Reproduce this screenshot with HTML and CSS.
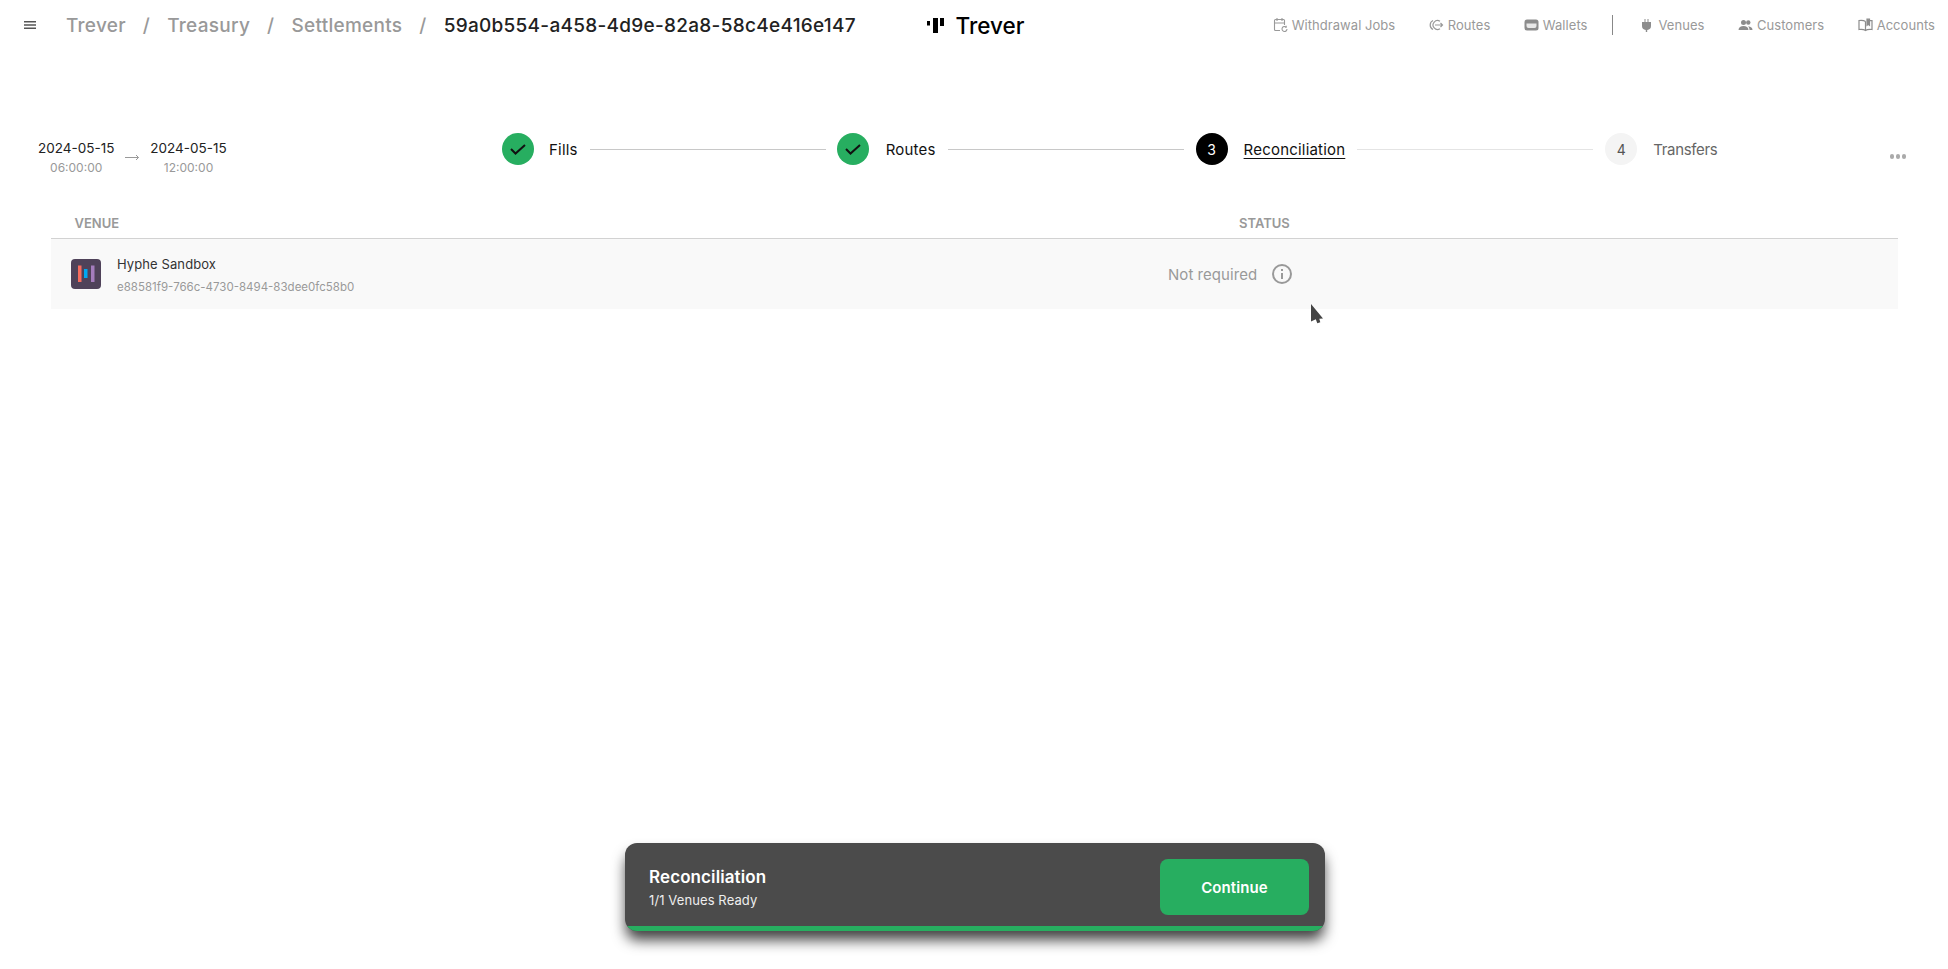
FILE: index.html
```html
<!DOCTYPE html>
<html lang="en">
<head>
<meta charset="utf-8">
<title>Settlement</title>
<link rel="stylesheet" href="styles.css">
</head>
<body>
<header class="topbar">
  <div class="crumbs">
    <svg class="menu" width="12" height="8" viewBox="0 0 12 8"><path d="M0 .75h12M0 4h12M0 7.25h12" stroke="#555" stroke-width="1.4"/></svg>
    <span class="crumb">Trever</span><span class="sep">/</span>
    <span class="crumb">Treasury</span><span class="sep">/</span>
    <span class="crumb">Settlements</span><span class="sep">/</span>
    <span class="crumb current">59a0b554-a458-4d9e-82a8-58c4e416e147</span>
  </div>
  <div class="logo">
    <svg width="17" height="15" viewBox="0 0 17 15"><path d="M0 3h3v4.500H0zM6 0h5v15H6zM13 0h4v8h-4z" fill="#000"/></svg>
    <span>Trever</span>
  </div>
  <nav class="nav">
    <a class="nav-item"><svg width="15" height="16" viewBox="0 0 15 16" fill="none" stroke="#999" stroke-width="1.1"><path d="M7 13.500H2.500a1 1 0 0 1-1-1v-9a1 1 0 0 1 1-1h8a1 1 0 0 1 1 1V8M4 1v3M9 1v3M1.500 6h10"/><path d="M14 12a2.500 2.500 0 1 1-1-2M13.200 8.800V10.200H11.800"/></svg>Withdrawal Jobs</a>
    <a class="nav-item"><svg width="15" height="14" viewBox="0 0 15 14" fill="none" stroke="#999" stroke-width="1.200"><path d="M4 2.500a5 5 0 0 0 0 9"/><path d="M11 3.200a4.500 4.500 0 1 0 0 7.600"/><path d="M6 7h7.500M11.500 5l2 2-2 2"/></svg>Routes</a>
    <a class="nav-item"><svg width="15" height="14" viewBox="0 0 15 14"><rect x=".5" y="1.500" width="14" height="11" rx="2.500" fill="#8c8c8c"/><path d="M2.500 5.500h10v2.500a2 2 0 0 1-2 2h-6a2 2 0 0 1-2-2z" fill="#e8e8e8"/></svg>Wallets</a>
    <span class="nav-div"></span>
    <a class="nav-item"><svg width="15" height="15" viewBox="0 0 15 15"><path d="M5.500 1h1v3h2V1h1v3H12v4a4 4 0 0 1-3.800 3.900V14H6.800v-2.100A4 4 0 0 1 3 8V4h2.500z" fill="#8c8c8c"/></svg>Venues</a>
    <a class="nav-item"><svg width="15" height="14" viewBox="0 0 15 14" fill="#8c8c8c"><circle cx="5.500" cy="4.500" r="2.500"/><circle cx="10.300" cy="4.500" r="2.200"/><path d="M.5 12c0-2.700 2.200-4 5-4s5 1.300 5 4z"/><path d="M11.500 12h3c0-2.200-1.400-3.500-4.500-3.800 1 .9 1.500 2.200 1.500 3.800z"/></svg>Customers</a>
    <a class="nav-item"><svg width="15" height="14" viewBox="0 0 15 14" fill="none" stroke="#8c8c8c" stroke-width="1.200"><path d="M7.500 3.500C6 2.400 3.500 2.200 1 2.500v9c2.500-.3 5-.1 6.500 1 1.500-1.100 4-1.300 6.500-1v-9c-1 0-2 0-2.500.1M7.500 3.500v9"/><path d="M9 1.200h2.500v6l-1.200-1-1.300 1z" fill="#8c8c8c"/></svg>Accounts</a>
  </nav>
</header>

<section class="steps-row">
  <div class="dates">
    <div class="date"><div class="d">2024-05-15</div><div class="t">06:00:00</div></div>
    <svg class="arrow" width="14" height="7" viewBox="0 0 14 7" fill="none" stroke="#999"><path d="M0 3.500h13.500M11 1l2.500 2.500L11 6"/></svg>
    <div class="date"><div class="d">2024-05-15</div><div class="t">12:00:00</div></div>
  </div>
  <div class="steps">
    <div class="bullet done"><svg width="16" height="11" viewBox="0 0 16 11" fill="none" stroke="#111" stroke-width="2"><path d="M1 5l4.500 4.500L15 1"/></svg></div>
    <span class="step-label step-fills">Fills</span>
    <span class="line line-first"></span>
    <div class="bullet done"><svg width="16" height="11" viewBox="0 0 16 11" fill="none" stroke="#111" stroke-width="2"><path d="M1 5l4.500 4.500L15 1"/></svg></div>
    <span class="step-label step-routes">Routes</span>
    <span class="line"></span>
    <div class="bullet active">3</div>
    <span class="step-label current">Reconciliation</span>
    <span class="line faint"></span>
    <div class="bullet todo">4</div>
    <span class="step-label muted">Transfers</span>
  </div>
  <div class="more"><i></i><i></i><i></i></div>
</section>

<section class="table">
  <div class="thead">
    <div class="col-venue">VENUE</div>
    <div class="col-status">STATUS</div>
  </div>
  <div class="row">
    <div class="venue">
      <svg class="venue-logo" width="30" height="30" viewBox="0 0 30 30"><rect width="30" height="30" rx="4" fill="#4f4259"/><rect x="7" y="6.500" width="3.500" height="16.500" fill="#f76c5e"/><rect x="13" y="10" width="3.500" height="9" fill="#00a8f0"/><rect x="20" y="6.500" width="3.500" height="16.500" fill="#a57dbd"/></svg>
      <div class="venue-text">
        <div class="venue-name">Hyphe Sandbox</div>
        <div class="venue-id">e88581f9-766c-4730-8494-83dee0fc58b0</div>
      </div>
    </div>
    <div class="status">
      <span>Not required</span>
      <svg width="20" height="20" viewBox="0 0 20 20" fill="none" stroke="#999" stroke-width="2"><circle cx="10" cy="10" r="9"/><path d="M10 9v6M10 5v2"/></svg>
    </div>
  </div>
</section>

<svg class="cursor" width="14" height="22" viewBox="0 0 14 22"><path d="M1 1l12 14.500-3.700.3 1 3.500-3 1-1.500-4L1 18.500z" fill="#444"/></svg>

<aside class="toast">
  <div class="toast-body">
    <div>
      <div class="toast-title">Reconciliation</div>
      <div class="toast-sub">1/1 Venues Ready</div>
    </div>
    <button class="continue">Continue</button>
  </div>
  <div class="toast-bar"></div>
</aside>
</body>
</html>
```
FILE: styles.css
```css
* { box-sizing: border-box; }
html, body { margin: 0; height: 100%; }
body { background: #fff; font-family: "Inter", "Liberation Sans", sans-serif; color: #111; overflow: hidden; position: relative; }

.topbar { height: 50px; display: grid; grid-template-columns: 1fr auto 1fr; align-items: center; }
.crumbs { display: flex; align-items: center; padding-left: 24px; font-size: 19px; font-weight: 500; letter-spacing: .28px; color: #999; white-space: nowrap; }
.menu { margin-right: 30px; }
.sep { margin: 0 17px; }
.current { color: #222; }
.logo { display: flex; align-items: center; gap: 12px; margin-left: 3px; font-size: 22.500px; font-weight: 500; color: #000; }
.nav { justify-self: end; padding-right: 13px; display: flex; align-items: center; gap: 33.500px; font-size: 13px; letter-spacing: .05px; color: #999; }
.nav-item { display: flex; align-items: center; gap: 4px; white-space: nowrap; }
.nav-div { width: 1px; height: 20px; background: #888; margin: 0 -7px 0 -9px; }

.steps-row { display: flex; align-items: flex-start; padding-left: 38px; margin-top: 83px; height: 40px; position: relative; }
.dates { display: flex; align-items: flex-start; width: 464px; gap: 11px; margin-top: 6px; }
.date { text-align: center; }
.d { font-size: 13.500px; color: #222; line-height: 18px; }
.t { font-size: 12px; color: #999; line-height: 16px; margin-top: 3px; }
.arrow { margin-top: 15px; }
.steps { display: flex; align-items: center; height: 32px; }
.bullet { width: 32px; height: 32px; border-radius: 50%; display: flex; align-items: center; justify-content: center; font-size: 14px; flex: none; }
.done { background: #27ae60; }
.active { background: #000; color: #fff; }
.todo { background: #f4f4f4; color: #555; }
.step-label { font-size: 15px; letter-spacing: .2px; margin: 0 12px 0 16px; white-space: nowrap; }
.step-fills { margin-left: 15px; }
.step-routes { margin-left: 17px; }
.step-label.current { text-decoration: underline; color: #111; text-underline-offset: 3px; }
.step-label.muted { color: #666; letter-spacing: -.35px; }
.line { height: 1px; background: #c8c8c8; width: 236px; flex: none; margin-right: 12px; }
.line-first { margin-right: 11px; }
.line.faint { background: #e4e4e4; }
.more { position: absolute; left: 1889.500px; top: 21px; display: flex; gap: 1.500px; }
.more i { width: 4.500px; height: 4.500px; border-radius: 50%; background: #aaa; display: block; }

.table { margin: 36px 50px 0 51px; }
.thead { height: 30px; display: flex; align-items: center; padding-bottom: 2px; border-bottom: 1.500px solid #d2d2d2; font-size: 13px; font-weight: 600; color: #999; }
.col-venue { padding-left: 23.500px; width: 1188px; }
.row { height: 70px; background: #f9f9f9; display: flex; align-items: center; }
.venue { display: flex; align-items: center; gap: 16px; padding-left: 20px; width: 1117px; }
.venue-text { padding-top: 1px; }
.venue-name { font-size: 13px; letter-spacing: .1px; color: #333; line-height: 18px; }
.venue-id { font-size: 11.500px; color: #999; line-height: 16px; margin-top: 6px; }
.status { display: flex; align-items: center; gap: 15px; font-size: 15px; letter-spacing: .05px; color: #999; }

.cursor { position: absolute; left: 1310px; top: 303px; }

.toast { position: absolute; left: calc(50% - 349px); bottom: 38px; width: 700px; height: 88px; background: #4b4b4b; border-radius: 12px; overflow: hidden; box-shadow: 0 10px 14px -1px rgba(0,0,0,.75); }
.toast-body { display: flex; align-items: center; justify-content: space-between; height: 83px; padding: 16px 16px 11px 24px; }
.toast-title { font-size: 17px; letter-spacing: .1px; font-weight: 600; color: #fff; line-height: 22px; }
.toast-sub { font-size: 13px; letter-spacing: .1px; color: #eee; line-height: 18px; margin-top: 3px; }
.continue { width: 149px; height: 56px; border: 0; border-radius: 8px; background: #27ae60; color: #fff; font: 600 15px "Inter", "Liberation Sans", sans-serif; letter-spacing: .1px; }
.toast-bar { height: 5px; margin: 0 2px; background: #27ae60; }
```
